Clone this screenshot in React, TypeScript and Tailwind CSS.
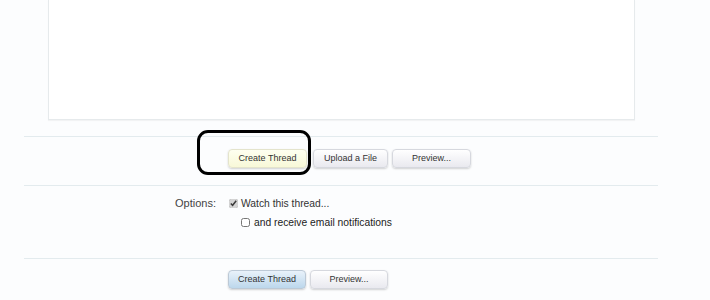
import type { ReactNode } from "react"

const Btn = ({ children, tone = "plain", w }: { children: ReactNode; tone?: "plain" | "hover" | "primary"; w: string }) => {
  const bg =
    tone === "hover"
      ? "bg-[linear-gradient(#fefff0,#f8f8d8)] border-[#e4e4cc]"
      : tone === "primary"
        ? "bg-[linear-gradient(#e9f2fa,#bcd7ec)] border-[#bcc9d6]"
        : "bg-[linear-gradient(#ffffff,#e9e9ef)] border-[#d6d8de]"
  return (
    <button
      className={`block ${w} h-[19px] rounded-[4px] border ${bg} text-[9px] leading-none text-[#333] shadow-[0_1px_2px_rgba(0,0,0,0.18)] font-['Liberation_Sans',Arial,sans-serif]`}
    >
      {children}
    </button>
  )
}

const Divider = () => <div className="h-px bg-[#e3ebee]" />

export default function App() {
  return (
    <div className="w-[710px] h-[300px] overflow-hidden bg-[#fcfdfe] font-['Liberation_Sans',Arial,sans-serif]">
      <div className="ml-[24px] w-[634px]">
        <div className="ml-[24px] w-[587px] h-[120px] bg-white border border-t-0 border-[#e6eaec] shadow-[0_1px_1px_rgba(0,0,0,0.04)]" />

        <div className="mt-[16px]">
          <Divider />
        </div>

        <div className="pl-[204px] pt-[12px] pb-[17px] flex items-start">
          <div className="relative flex">
            <Btn tone="hover" w="w-[79px]">Create Thread</Btn>
            <div className="absolute left-[-31px] top-[-19px] w-[114px] h-[45px] rounded-[11px] border-[3px] border-black" />
          </div>
          <div className="ml-[6px]">
            <Btn w="w-[75px]">Upload a File</Btn>
          </div>
          <div className="ml-[4px]">
            <Btn w="w-[79px]">Preview...</Btn>
          </div>
        </div>

        <Divider />

        <div className="grid grid-cols-[192px_1fr] gap-x-[13px] pt-[10px] pb-[28px] text-[11px] leading-[15px] text-[#444]">
          <div className="text-right">Options:</div>
          <div className="flex flex-col gap-[4px]">
            <label className="flex items-center gap-[3px] text-[#333]">
              <input type="checkbox" defaultChecked className="w-[9px] h-[9px] m-0 accent-[#d4d4d4]" />
              <span className="text-[10.3px]">Watch this thread...</span>
            </label>
            <label className="flex items-center gap-[4px] ml-[12px] text-[#222]">
              <input type="checkbox" className="w-[9px] h-[9px] m-0" />
              <span className="text-[10.3px]">and receive email notifications</span>
            </label>
          </div>
        </div>

        <Divider />

        <div className="pl-[204px] pt-[11px] flex gap-[4px]">
          <Btn tone="primary" w="w-[78px]">Create Thread</Btn>
          <Btn w="w-[78px]">Preview...</Btn>
        </div>
      </div>
    </div>
  )
}
